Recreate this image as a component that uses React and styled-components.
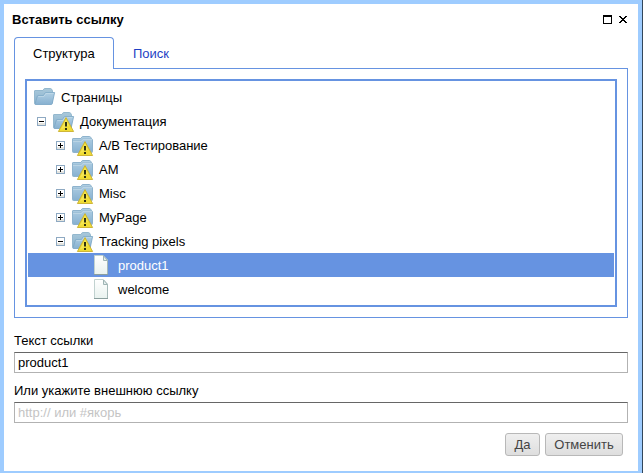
import React from "react";
import styled, { createGlobalStyle } from "styled-components";

const GlobalStyle = createGlobalStyle`
  * { box-sizing: border-box; }
  body {
    margin: 0;
    overflow: hidden;
    background: #fff;
    color: #000;
    font: 13px/16px "Liberation Sans", Arial, sans-serif;
  }
`;

const Page = styled.div`
  display: flex;
  height: 473px;
  border-right: 1px solid #33475b;
`;

const Dialog = styled.section`
  display: flex;
  flex: 1;
  flex-direction: column;
  background: #fff;
  border: 4px solid #9eccff;
  border-bottom-width: 2px;
`;

const TitleBar = styled.header`
  display: flex;
  align-items: center;
  justify-content: space-between;
  height: 33px;
  padding: 0 11px 1px 8px;
`;

const Title = styled.h1`
  margin: 0;
  font-size: 13px;
  line-height: 16px;
`;

const WindowTools = styled.div`
  display: flex;
  gap: 7px;
  padding-bottom: 1px;
  svg { display: block; }
`;

const Content = styled.div`
  padding: 0 10px;
`;

const Tabs = styled.div`
  display: flex;
  height: 32px;
`;

const Tab = styled.div`
  display: flex;
  align-items: center;
  height: 32px;
  padding: 0 18px;
  border: 1px solid #6693e1;
  border-bottom: 0;
  border-radius: 4px 4px 0 0;
  width: 100px;
`;

const TabLink = styled.div`
  display: flex;
  flex: 1;
  align-items: center;
  padding: 2px 0 0 19px;
  border-bottom: 1px solid #6693e1;
  color: #1f3fc4;
`;

const Panel = styled.div`
  height: 249px;
  padding: 10px;
  border: 1px solid #6693e1;
  border-top: 0;
`;

const Tree = styled.div`
  height: 228px;
  padding: 4px 1px;
  border: 2px solid #6693e1;
`;

const Row = styled.div`
  display: flex;
  align-items: center;
  height: 24px;
  padding-left: ${(p) => 6 + p.$level * 19 - (p.$expander ? 16 : 0)}px;
  background: ${(p) => (p.$selected ? "#6693e1" : "transparent")};
  color: ${(p) => (p.$selected ? "#fff" : "#000")};
`;

const ToggleSlot = styled.span`
  width: 16px;
  height: 9px;
  svg { display: block; }
`;

const IconSlot = styled.span`
  width: 27px;
  height: 24px;
  svg { display: block; }
`;

const RowLabel = styled.span`
  padding-top: 1px;
`;

const Fields = styled.div`
  display: flex;
  flex-direction: column;
  gap: 8px;
  padding-top: 15px;
`;

const Field = styled.label`
  display: flex;
  flex-direction: column;
  gap: 3px;
  height: 42px;
  padding-top: 2px;
  &:first-child { padding-top: 0; height: 40px; }
`;

const Input = styled.input`
  width: 100%;
  height: 21px;
  padding: 0 3px 1px;
  border: 1px solid #b2b2b2;
  border-top-color: #666;
  border-radius: 0;
  background: #fff;
  color: #000;
  font: inherit;
  outline: 0;
  &::placeholder { color: #c4c4c4; opacity: 1; }
`;

const Actions = styled.footer`
  display: flex;
  justify-content: flex-end;
  gap: 5px;
  padding: 10px 5px 0;
`;

const Button = styled.button`
  width: ${(p) => p.$width}px;
  height: 23px;
  padding: 0;
  border: 1px solid #b8b8b8;
  border-radius: 3px;
  background: linear-gradient(#efefef, #dedede);
  color: #444;
  font: inherit;
`;

function Toggle({ open }) {
  return (
    <svg width="9" height="9" viewBox="0 0 9 9" shapeRendering="crispEdges">
      <rect x=".5" y=".5" width="8" height="8" fill="#fff" stroke="#8ea9c2" />
      <path d="M1 8V6h7v2z" fill="#e4e4df" />
      <path d="M2 4h5v1H2z" />
      {!open && <path d="M4 2h1v5H4z" />}
    </svg>
  );
}

function Warning() {
  return (
    <g>
      <path d="M13 8.6 20.6 22.5H5.4Z" fill="#f0dc35" stroke="#c9b02e" strokeWidth=".9" strokeLinejoin="round" />
      <path d="M13 10.5 16 16.5 8 20.5Z" fill="#faef72" opacity=".5" />
      <path d="M12 13h2v4.5H12zM12 19h2v2H12z" fill="#30320f" />
    </g>
  );
}

function Folder({ open, warning }) {
  return (
    <svg width="23" height="24" viewBox="0 0 23 24">
      <defs>
        <linearGradient id="folderFace" x1="0" y1="0" x2="0" y2="1">
          <stop stopColor="#b2d0e4" />
          <stop offset="1" stopColor="#86b0d0" />
        </linearGradient>
        <linearGradient id="folderBack" x1="0" y1="0" x2="0" y2="1">
          <stop stopColor="#a9c8da" />
          <stop offset="1" stopColor="#8ab3cf" />
        </linearGradient>
      </defs>
      {open ? (
        <>
          <path d="M.5 18.5V6Q.5 5.5 1 5.5H9L10 3.8Q10.2 3.5 11 3.5H16.5Q17.3 3.5 17.5 4L18.5 6V18Z" fill="url(#folderBack)" stroke="#94b8ce" />
          <path d="M1 19.2 3.4 11Q3.6 10.5 4.2 10.5H9.5L11.2 7.9Q11.5 7.5 12 7.5H20.6L18.2 18.8Q18 19.5 17.2 19.5H1.2Z" fill="url(#folderFace)" stroke="#7fa9c7" strokeWidth=".9" />
          <path d="M4.3 11.4H10L11.9 8.4H19.5" fill="none" stroke="#c3dae8" strokeWidth=".8" />
        </>
      ) : (
        <>
          <path d="M.5 18.5V6Q.5 5.5 1 5.5H9L10 3.8Q10.2 3.5 11 3.5H17.5Q18.3 3.5 18.7 4.2L19.5 6Q20.5 6 20.5 7V18.5Q20.5 19.5 19.5 19.5H1.5Q.5 19.5.5 18.5Z" fill="url(#folderFace)" stroke="#8eb3cd" />
          <path d="M1 8.5H9.5L11 6.5H20" fill="none" stroke="#c3dae8" strokeWidth=".8" />
          <path d="M1 7.6H9L10.5 5.6H19.5" fill="none" stroke="#98bbd2" strokeWidth=".7" />
        </>
      )}
      {warning && <Warning />}
    </svg>
  );
}

function Sheet() {
  return (
    <svg width="23" height="24" viewBox="0 0 23 24">
      <defs>
        <linearGradient id="paper" x1="0" y1="0" x2="0" y2="1">
          <stop stopColor="#fff" />
          <stop offset="1" stopColor="#e9f2ef" />
        </linearGradient>
      </defs>
      <path d="M3.5 2.5H12L16.5 7V21.5H3.5Z" fill="url(#paper)" stroke="#c1d2d0" />
      <path d="M3 21.5H17" stroke="#8b9f9e" />
      <path d="M16.5 8V21" stroke="#a5b9b8" />
      <path d="M12.5 2.8V7.5H16.5Z" fill="#e5eeee" stroke="#9fb4b4" strokeLinejoin="round" />
    </svg>
  );
}

const nodes = [
  { label: "Страницы", level: 0, kind: "open" },
  { label: "Документация", level: 1, kind: "open", toggle: "open", warning: true },
  { label: "A/B Тестирование", level: 2, toggle: "closed", warning: true },
  { label: "AM", level: 2, toggle: "closed", warning: true },
  { label: "Misc", level: 2, toggle: "closed", warning: true },
  { label: "MyPage", level: 2, toggle: "closed", warning: true },
  { label: "Tracking pixels", level: 2, kind: "open", toggle: "open", warning: true },
  { label: "product1", level: 3, kind: "sheet", selected: true },
  { label: "welcome", level: 3, kind: "sheet" },
];

export default function App() {
  return (
    <Page>
      <GlobalStyle />
      <Dialog>
        <TitleBar>
          <Title>Вставить ссылку</Title>
          <WindowTools>
            <svg width="9" height="9" viewBox="0 0 9 9" shapeRendering="crispEdges">
              <path d="M0 0h9v9H0zM1 2v6h7V2z" fillRule="evenodd" />
            </svg>
            <svg width="8" height="9" viewBox="0 0 8 9" shapeRendering="crispEdges">
              <path d="M0 1h2v1H0zM6 1h2v1H6zM1 2h2v1H1zM5 2h2v1H5zM2 3h4v1H2zM3 4h2v1H3zM2 5h4v1H2zM1 6h2v1H1zM5 6h2v1H5zM0 7h2v1H0zM6 7h2v1H6z" />
            </svg>
          </WindowTools>
        </TitleBar>
        <Content>
          <Tabs>
            <Tab>Структура</Tab>
            <TabLink>Поиск</TabLink>
          </Tabs>
          <Panel>
            <Tree>
              {nodes.map((node) => (
                <Row key={node.label} $level={node.level} $expander={!!node.toggle} $selected={node.selected}>
                  {node.toggle && <ToggleSlot><Toggle open={node.toggle === "open"} /></ToggleSlot>}
                  <IconSlot>
                    {node.kind === "sheet" ? <Sheet /> : <Folder open={node.kind === "open"} warning={node.warning} />}
                  </IconSlot>
                  <RowLabel>{node.label}</RowLabel>
                </Row>
              ))}
            </Tree>
          </Panel>
          <Fields>
            <Field>Текст ссылки<Input defaultValue="product1" /></Field>
            <Field>Или укажите внешнюю ссылку<Input placeholder="http:// или #якорь" /></Field>
          </Fields>
          <Actions>
            <Button $width={35}>Да</Button>
            <Button $width={78}>Отменить</Button>
          </Actions>
        </Content>
      </Dialog>
    </Page>
  );
}
